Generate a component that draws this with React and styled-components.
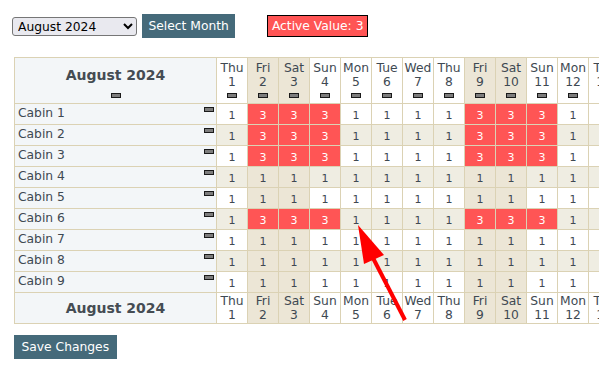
import React from 'react';
import styled, { createGlobalStyle } from 'styled-components';

const GlobalStyle = createGlobalStyle`
    html, body {
        margin: 0;
        padding: 0;
        overflow: hidden;
        background: #fff;
    }

    body {
        font-family: "DejaVu Sans", Verdana, sans-serif;
        font-size: 12.3px;
        color: #3e4952;
    }
`;

const DAY_NAMES = ['Sun', 'Mon', 'Tue', 'Wed', 'Thu', 'Fri', 'Sat'];
const CABINS = ['Cabin 1', 'Cabin 2', 'Cabin 3', 'Cabin 4', 'Cabin 5', 'Cabin 6', 'Cabin 7', 'Cabin 8', 'Cabin 9'];
const BUSY_CABINS = [0, 1, 2, 5];
const BUSY_DAYS = [2, 3, 4, 9, 10, 11];
const VISIBLE_DAYS = 13;

// August 2024 starts on a Thursday
const days = Array.from({ length: VISIBLE_DAYS }, (_, i) => {
    const dow = (4 + i) % 7;
    return { date: i + 1, name: DAY_NAMES[dow], weekend: dow === 5 || dow === 6 };
});

const cellBg = (weekend, striped) => {
    if (weekend) return '#ece6d6';
    if (striped) return '#efede2';
    return '#fff';
};

export default function App() {
    return (
        <Page>
            <GlobalStyle />
            <Toolbar>
                <MonthSelect defaultValue="2024-08">
                    <option value="2024-07">July 2024</option>
                    <option value="2024-08">August 2024</option>
                    <option value="2024-09">September 2024</option>
                </MonthSelect>
                <Button type="button">Select Month</Button>
                <ActiveValue>Active Value: 3</ActiveValue>
            </Toolbar>

            <Grid $days={days.length}>
                <colgroup>
                    <col style={{ width: 202 }} />
                    {days.map((d) => (
                        <col key={d.date} style={{ width: 31 }} />
                    ))}
                </colgroup>
                <thead>
                    <HeadRow>
                        <MonthHead>
                            <MonthTitle>August 2024</MonthTitle>
                            <Toggle $gap={9} />
                        </MonthHead>
                        {days.map((d) => (
                            <DayHead key={d.date} $weekend={d.weekend}>
                                <div>{d.name}</div>
                                <div>{d.date}</div>
                                <Toggle $gap={4} />
                            </DayHead>
                        ))}
                    </HeadRow>
                </thead>
                <tbody>
                    {CABINS.map((cabin, r) => {
                        const striped = r % 2 === 1;
                        return (
                            <CabinRow key={cabin}>
                                <CabinCell>
                                    <CabinInner>
                                        <span>{cabin}</span>
                                        <Toggle />
                                    </CabinInner>
                                </CabinCell>
                                {days.map((d) => {
                                    const busy = BUSY_CABINS.includes(r) && BUSY_DAYS.includes(d.date);
                                    return (
                                        <ValueCell
                                            key={d.date}
                                            $bg={busy ? '#ff5555' : cellBg(d.weekend, striped)}
                                            $busy={busy}
                                        >
                                            {busy ? 3 : 1}
                                        </ValueCell>
                                    );
                                })}
                            </CabinRow>
                        );
                    })}
                </tbody>
                <tfoot>
                    <FootRow>
                        <MonthFoot>
                            <MonthTitle>August 2024</MonthTitle>
                        </MonthFoot>
                        {days.map((d) => (
                            <DayFoot key={d.date} $weekend={d.weekend}>
                                <div>{d.name}</div>
                                <div>{d.date}</div>
                            </DayFoot>
                        ))}
                    </FootRow>
                </tfoot>
            </Grid>

            <SaveButton type="button">Save Changes</SaveButton>

            <Arrow viewBox="0 0 599 376" width="599" height="376">
                <line x1="405" y1="320" x2="373" y2="258" stroke="#ff0000" strokeWidth="4" />
                <polygon points="358,225 364,264 384,255" fill="#ff0000" />
            </Arrow>
        </Page>
    );
}

const Page = styled.div`
    position: relative;
    width: 599px;
    height: 376px;
    overflow: hidden;
`;

const Toolbar = styled.div`
    display: flex;
    align-items: center;
    height: 24px;
    padding: 14px 0 0 12px;
`;

const MonthSelect = styled.select`
    box-sizing: border-box;
    width: 125px;
    height: 19px;
    margin: 1px 5px 0 0;
    padding: 0 0 0 1px;
    border: 1px solid #767676;
    border-radius: 3px;
    background-color: #e9e9ef;
    font-family: "DejaVu Sans", Verdana, sans-serif;
    font-size: 12.3px;
    color: #000;
`;

const Button = styled.button`
    height: 24px;
    padding: 0 6.5px;
    border: none;
    background: #456a7a;
    color: #fff;
    font-family: inherit;
    font-size: 12.3px;
    cursor: pointer;
`;

const SaveButton = styled(Button)`
    display: block;
    margin: 11px 0 0 14px;
    padding: 0 7.5px;
`;

const ActiveValue = styled.div`
    display: inline-flex;
    align-items: center;
    box-sizing: border-box;
    height: 22px;
    margin-left: 32px;
    padding: 0 3.5px;
    border: 1px solid #000;
    background: #ff5555;
    color: #fff;
`;

const Grid = styled.table`
    border-collapse: collapse;
    table-layout: fixed;
    width: ${(p) => 202 + 31 * p.$days}px;
    margin: 19px 0 0 14px;

    td, th {
        border: 1px solid #dbd2b4;
        padding: 0;
        font-weight: normal;
        overflow: hidden;
        white-space: nowrap;
    }
`;

const HeadRow = styled.tr`
    height: 46px;
`;

const CabinRow = styled.tr`
    height: 21px;
`;

const FootRow = styled.tr`
    height: 31px;
`;

const MonthHead = styled.th`
    background: #f3f6f8;
    vertical-align: bottom;
    text-align: center;
    && {
        padding-bottom: 5px;
    }
`;

const MonthFoot = styled.th`
    background: #f3f6f8;
    vertical-align: middle;
    text-align: center;
`;

const MonthTitle = styled.div`
    font-size: 14px;
    font-weight: bold;
    line-height: 17px;
    color: #454c53;
`;

const DayHead = styled.th`
    background: ${(p) => (p.$weekend ? '#ece6d6' : '#fff')};
    vertical-align: bottom;
    text-align: center;
    line-height: 14px;
    && {
        padding-bottom: 5px;
    }
`;

const DayFoot = styled.th`
    background: ${(p) => (p.$weekend ? '#ece6d6' : '#fff')};
    vertical-align: middle;
    text-align: center;
    line-height: 14px;
`;

const Toggle = styled.span`
    display: block;
    box-sizing: border-box;
    width: 10px;
    height: 5px;
    margin: ${(p) => (p.$gap ? `${p.$gap}px auto 0` : '1px 0 0')};
    border: 1px solid #1a1a1a;
    background: #7d7d7d;
    flex-shrink: 0;
`;

const CabinCell = styled.td`
    background: #f3f6f8;
    vertical-align: top;
    && {
        padding: 2px 2px 0 3px;
    }
`;

const CabinInner = styled.div`
    display: flex;
    justify-content: space-between;
    align-items: flex-start;
    line-height: 14px;
`;

const ValueCell = styled.td`
    background: ${(p) => p.$bg};
    color: ${(p) => (p.$busy ? '#fff' : '#3e4952')};
    text-align: center;
    vertical-align: top;
    font-size: 11px;
    line-height: 13px;
    && {
        padding-top: 5px;
    }
`;

const Arrow = styled.svg`
    position: absolute;
    top: 0;
    left: 0;
    pointer-events: none;
`;
